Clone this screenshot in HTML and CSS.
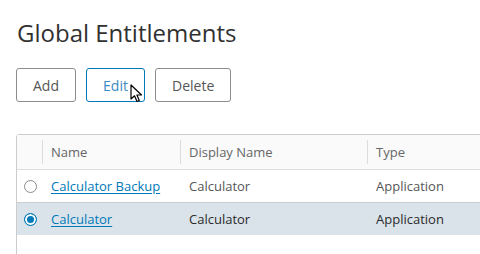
FILE: index.html
```html
<!DOCTYPE html>
<html>
<head>
<meta charset="utf-8">
<link rel="stylesheet" href="styles.css">
</head>
<body>
<div class="page">
  <h1 class="title">Global Entitlements</h1>
  <div class="toolbar">
    <button class="btn">Add</button>
    <button class="btn btn-hover">Edit
      <svg class="cursor" width="14" height="20" viewBox="0 0 14 20">
        <path d="M1 1 L1 15 L4.5 11.8 L7 17.5 L9.3 16.5 L6.9 11 L11.5 11 Z" fill="#fff" stroke="#000" stroke-width="1.2" stroke-linejoin="round"/>
      </svg>
    </button>
    <button class="btn">Delete</button>
  </div>
  <div class="grid-wrap">
    <div class="grid">
      <div class="row head">
        <div class="cell sel"></div>
        <div class="cell c-name"><span class="sep"></span>Name</div>
        <div class="cell c-disp"><span class="sep"></span>Display Name</div>
        <div class="cell c-type"><span class="sep"></span>Type</div>
      </div>
      <div class="row">
        <div class="cell sel"><span class="radio"></span></div>
        <div class="cell c-name"><a class="link">Calculator Backup</a></div>
        <div class="cell c-disp">Calculator</div>
        <div class="cell c-type">Application</div>
      </div>
      <div class="row selected">
        <div class="cell sel"><span class="radio on"></span></div>
        <div class="cell c-name"><a class="link">Calculator</a></div>
        <div class="cell c-disp">Calculator</div>
        <div class="cell c-type">Application</div>
      </div>
    </div>
  </div>
</div>
</body>
</html>
```

FILE: styles.css
```css
html, body {
  margin: 0;
  padding: 0;
  background: #fff;
  overflow: hidden;
}
body {
  width: 480px;
  height: 254px;
  font-family: "Open Sans", "Noto Sans", sans-serif;
}
.page {
  padding: 16px 0 0 16px;
}
.title {
  margin: 0;
  font-size: 24px;
  font-weight: 400;
  line-height: 34px;
  color: #313131;
  padding-left: 1px;
}
.toolbar {
  display: flex;
  gap: 10px;
  margin-top: 18px;
}
.btn {
  position: relative;
  height: 34px;
  padding: 0 16px;
  border: 1px solid #8c8c8c;
  border-radius: 3px;
  background: #fff;
  font-family: inherit;
  font-size: 14px;
  color: #565656;
  cursor: pointer;
}
.btn:nth-child(1) { width: 60px; }
.btn:nth-child(2) { width: 59px; }
.btn:nth-child(3) { width: 76px; }
.btn-hover {
  border-color: #0079b8;
  color: #3a8bc2;
}
.cursor {
  position: absolute;
  left: 43px;
  top: 15px;
}
.grid-wrap {
  margin-top: 32px;
  overflow: hidden;
}
.grid {
  width: 560px;
  height: 130px;
  border: 1px solid #ccc;
  border-radius: 3px 0 0 0;
  font-size: 13px;
}
.row {
  display: flex;
  height: 32px;
  align-items: center;
  border-bottom: 1px solid #ccc;
  color: #565656;
}
.row.head {
  height: 34px;
  background: #fafafa;
  color: #666;
  border-bottom-color: #ddd;
}
.row.selected {
  background: #dae3ea;
  color: #2b2b2b;
  border-bottom: none;
}
.cell {
  position: relative;
  height: 100%;
  display: flex;
  align-items: center;
  box-sizing: border-box;
}
.sel {
  width: 25px;
  justify-content: center;
  padding-left: 2px;
}
.c-name { width: 138px; padding-left: 9px; }
.c-disp { width: 187px; padding-left: 9px; }
.c-type { width: 180px; padding-left: 9px; }
.sep {
  position: absolute;
  left: 0;
  top: 5px;
  bottom: 5px;
  width: 1px;
  background: #ddd;
}
.link {
  color: #0079b8;
  text-decoration: underline;
  text-underline-offset: 2px;
}
.radio {
  width: 11px;
  height: 11px;
  border: 1px solid #8c8c8c;
  border-radius: 50%;
  background: #fff;
  box-sizing: content-box;
}
.radio.on {
  border-color: #0079b8;
  background: #0079b8;
  box-shadow: inset 0 0 0 2px #fff;
}
```
